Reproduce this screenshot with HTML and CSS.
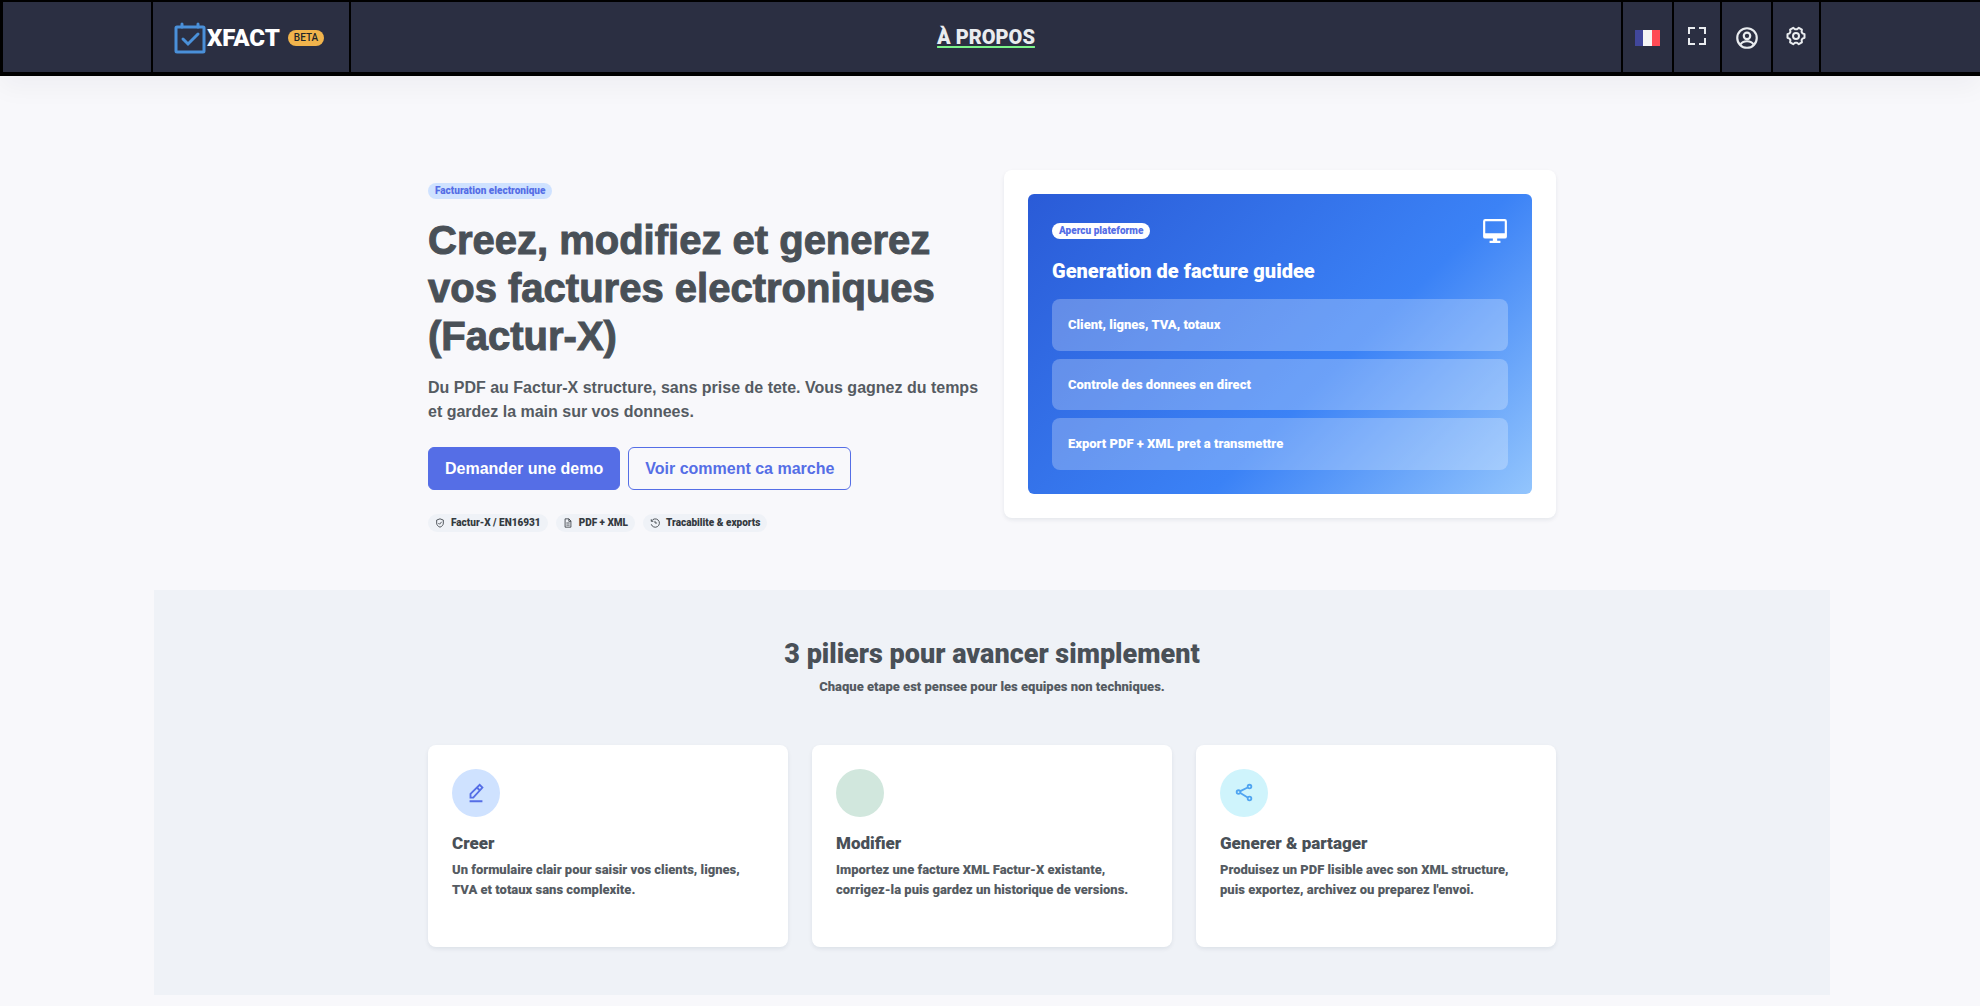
FILE: index.html
```html
<!DOCTYPE html>
<html lang="fr">
<head>
  <meta charset="UTF-8" />
  <meta name="viewport" content="width=device-width, initial-scale=1" />
  <title>XFACT - Facturation electronique</title>
  <link rel="stylesheet" href="styles.css">
</head>
<body>

  <!-- Barre de navigation -->
  <header class="topbar">
    <a class="brand" href="#">
      <svg class="brand-logo" viewBox="0 0 32 32" aria-hidden="true">
        <rect x="2" y="5" width="28" height="25" rx="1" />
        <path d="M8 2v3M24 2v3M9 17l5 5 10-10" />
      </svg>
      <span class="brand-name">XFACT</span>
      <span class="beta">BETA</span>
    </a>

    <nav class="menu">
      <a href="#apropos">À PROPOS</a>
    </nav>

    <div class="tools">
      <button class="tool wide" type="button" aria-label="Langue">
        <svg class="flag" viewBox="0 0 25 16">
          <rect width="9" height="16" fill="#41479b" />
          <rect x="8" width="9" height="16" fill="#f5f5f5" />
          <rect x="17" width="8" height="16" fill="#ff4b55" />
        </svg>
      </button>
      <button class="tool" type="button" aria-label="Plein écran">
        <svg viewBox="0 0 24 24"><path d="M3 3h7v2H5v5H3V3zm11 0h7v7h-2V5h-5V3zM3 14h2v5h5v2H3v-7zm16 0h2v7h-7v-2h5v-5z" /></svg>
      </button>
      <button class="tool wide" type="button" aria-label="Compte">
        <svg class="big line" viewBox="0 0 24 24"><circle cx="12" cy="12" r="9" /><circle cx="12" cy="10" r="3" /><path d="M6 18c1-2 3-3 6-3s5 1 6 3" /></svg>
      </button>
      <button class="tool" type="button" aria-label="Paramètres">
        <svg class="line" viewBox="0 0 24 24"><path d="M20.500 13.800v-3.600L18.400 9.300l-.8-1.400.3-2.300-3.100-1.800L13 5.200h-2L9.200 3.800 6.100 5.600l.3 2.300-.8 1.400-2.100.9v3.600l2.100.9.8 1.400-.3 2.300 3.100 1.800 1.800-1.400h2l1.800 1.400 3.100-1.800-.3-2.300.8-1.400z" /><circle cx="12" cy="12" r="3" /></svg>
      </button>
    </div>
  </header>

  <main class="page">

    <!-- Accroche -->
    <section class="hero container">
      <div class="hero-text">
        <span class="badge badge-soft">Facturation electronique</span>
        <h1>Creez, modifiez et generez vos factures electroniques (Factur-X)</h1>
        <p class="lead">Du PDF au Factur-X structure, sans prise de tete. Vous gagnez du temps et gardez la main sur vos donnees.</p>
        <div class="actions">
          <a class="btn btn-primary" href="#demo">Demander une demo</a>
          <a class="btn btn-outline" href="#piliers">Voir comment ca marche</a>
        </div>
        <ul class="tags">
          <li>
            <svg viewBox="0 0 24 24"><path d="M12 2l8 3v7c0 5-3 8-8 10-5-2-8-5-8-10V5z" /><path d="M8 12l3 3 5-6" /></svg>
            Factur-X / EN16931
          </li>
          <li>
            <svg viewBox="0 0 24 24"><path d="M5 2h9l5 5v15H5zM14 2v6h5M8 12h8M8 17h8" /></svg>
            PDF + XML
          </li>
          <li>
            <svg viewBox="0 0 24 24"><path d="M4 7a10 10 0 1 1-1 8M3 3v5h5M12 7v5h5" /></svg>
            Tracabilite &amp; exports
          </li>
        </ul>
      </div>

      <div class="card hero-card">
        <div class="preview">
          <div class="preview-head">
            <span class="badge badge-light">Apercu plateforme</span>
            <svg class="screen" viewBox="0 0 24 24" aria-hidden="true"><path fill-rule="evenodd" d="M3 1h18a2 2 0 0 1 2 2v14a2 2 0 0 1-2 2h-7v2h3v2H7v-2h3v-2H3a2 2 0 0 1-2-2V3a2 2 0 0 1 2-2zm0 2v11h18V3z" /></svg>
          </div>
          <h2>Generation de facture guidee</h2>
          <ul class="steps">
            <li>Client, lignes, TVA, totaux</li>
            <li>Controle des donnees en direct</li>
            <li>Export PDF + XML pret a transmettre</li>
          </ul>
        </div>
      </div>
    </section>

    <!-- Piliers -->
    <section class="pillars" id="piliers">
      <div class="container">
        <h2>3 piliers pour avancer simplement</h2>
        <p class="subtitle">Chaque etape est pensee pour les equipes non techniques.</p>
        <div class="cards">
          <article class="card pillar">
            <div class="icon icon-blue">
              <svg viewBox="0 0 24 24"><path d="M6 13L16 3l3 3L9 17H6zM13 6l3 3M5 21h14" /></svg>
            </div>
            <h3>Creer</h3>
            <p>Un formulaire clair pour saisir vos clients, lignes, TVA et totaux sans complexite.</p>
          </article>
          <article class="card pillar">
            <div class="icon icon-green"></div>
            <h3>Modifier</h3>
            <p>Importez une facture XML Factur-X existante, corrigez-la puis gardez un historique de versions.</p>
          </article>
          <article class="card pillar">
            <div class="icon icon-cyan">
              <svg viewBox="0 0 24 24"><circle cx="6" cy="11" r="2" /><circle cx="18" cy="5" r="2" /><circle cx="18" cy="18" r="2" /><path d="M8 10l8-4M8 12l8 5" /></svg>
            </div>
            <h3>Generer &amp; partager</h3>
            <p>Produisez un PDF lisible avec son XML structure, puis exportez, archivez ou preparez l'envoi.</p>
          </article>
        </div>
      </div>
    </section>

  </main>

</body>
</html>
```
FILE: styles.css
```css
* {
  box-sizing: border-box;
}

body {
  margin: 0;
  font-family: Roboto, Arial, sans-serif;
  font-weight: 900;
  font-size: 13px;
  line-height: 20px;
  background-color: #f8f8fb;
  color: #555b62;
}

h1, h2, h3, p, ul {
  margin: 0;
  padding: 0;
}

h1, h2, h3 {
  color: #495057;
  font-weight: 900;
}

ul {
  list-style: none;
}

a {
  text-decoration: none;
}

svg {
  display: block;
}

/* Barre du haut */
.topbar {
  display: flex;
  height: 76px;
  padding: 0 159px 0 148px;
  background-color: #2b2f42;
  border: solid #000;
  border-width: 2px 0 4px 3px;
  box-shadow: 0 12px 24px rgba(18, 20, 40, 0.04);
}

.brand {
  display: flex;
  align-items: center;
  width: 200px;
  padding: 2px 0 0 21px;
  border: solid #000;
  border-width: 0 2px;
  color: #fff;
}

.brand-logo {
  width: 32px;
  height: 32px;
  fill: none;
  stroke: #4a90d9;
  stroke-width: 3;
  stroke-linecap: round;
}

.brand-name {
  margin-left: 1px;
  font-size: 24px;
}

.beta {
  margin-left: 8px;
  padding: 0 6px;
  border-radius: 8px;
  background-color: #f1b44c;
  color: #212529;
  font-size: 10px;
  font-weight: 500;
  line-height: 16px;
}

.menu {
  flex: 1;
  display: flex;
  align-items: center;
  justify-content: center;
}

.menu a {
  color: #e9ecef;
  font-size: 20px;
  text-decoration: underline #7cf58a 2px;
  text-underline-offset: 2px;
}

.tools {
  display: flex;
  border-left: 2px solid #000;
}

.tool {
  display: flex;
  align-items: center;
  justify-content: center;
  width: 48px;
  padding: 0 0 2px;
  border: 0;
  border-right: 2px solid #000;
  background: none;
  cursor: pointer;
}

.tool.wide {
  width: 51px;
  padding: 2px 0 0;
}

.tool svg {
  width: 24px;
  height: 24px;
  fill: #e9ecef;
}

.tool .flag {
  width: 25px;
  height: 16px;
}

.tool .big {
  width: 26px;
  height: 26px;
}

.tool .line {
  fill: none;
  stroke: #e9ecef;
  stroke-width: 2;
  stroke-linejoin: round;
}

/* Contenu */
.page {
  padding: 94px 150px 10px 154px;
}

.container {
  max-width: 1128px;
  margin: 0 auto;
}

.card {
  background-color: #fff;
  border-radius: 8px;
  box-shadow: 0 2px 4px rgba(15, 34, 58, 0.08);
}

.badge {
  display: inline-block;
  padding: 0 7px;
  border-radius: 8px;
  font-size: 10px;
  line-height: 16px;
  color: #556ee6;
}

.badge-soft {
  background-color: #cfe2ff;
}

.badge-light {
  background-color: #fff;
}

.hero {
  display: grid;
  grid-template-columns: 1fr 1fr;
  gap: 24px;
  align-items: center;
  padding-bottom: 48px;
}

.hero h1,
.lead,
.btn {
  font-family: "Liberation Sans", Arial, sans-serif;
  font-weight: 700;
}

.hero h1 {
  margin: 16px 0;
  font-size: 40px;
  line-height: 48px;
  -webkit-text-stroke: 1px #495057;
}

.lead {
  font-size: 16px;
  line-height: 24px;
}

.actions {
  display: flex;
  gap: 8px;
  margin: 23px 0 24px;
}

.btn {
  padding: 8px 16px;
  border: 1px solid #556ee6;
  border-radius: 6px;
  font-size: 16px;
  line-height: 25px;
}

.btn-primary {
  background-color: #556ee6;
  color: #fff;
}

.btn-outline {
  color: #556ee6;
}

.tags {
  display: flex;
  gap: 8px;
}

.tags li {
  display: flex;
  align-items: center;
  gap: 6px;
  padding: 0 7px;
  border-radius: 9px;
  background-color: #eff2f7;
  color: #343a40;
  font-size: 10px;
  line-height: 18px;
}

.tags svg {
  width: 10px;
  height: 10px;
  fill: none;
  stroke: #343a40;
  stroke-width: 2;
}

.hero-card {
  margin-bottom: 24px;
  padding: 24px;
}

.preview {
  display: flex;
  flex-direction: column;
  height: 300px;
  padding: 24px;
  border-radius: 6px;
  background: linear-gradient(135deg, #2a5bd7 0%, #3b82f6 60%, #93c5fd 100%);
  color: #fff;
}

.preview-head {
  display: flex;
  align-items: center;
  justify-content: space-between;
}

.screen {
  width: 26px;
  height: 26px;
  fill: #fff;
}

.preview h2 {
  margin: 15px 0 16px;
  color: #fff;
  font-size: 20px;
  line-height: 24px;
}

.steps {
  flex: 1;
  display: flex;
  flex-direction: column;
  gap: 8px;
}

.steps li {
  flex: 1;
  display: flex;
  align-items: center;
  padding: 0 16px;
  border-radius: 8px;
  background-color: rgba(255, 255, 255, 0.25);
}

.pillars {
  padding: 48px 0;
  background-color: #eff2f7;
}

.pillars h2 {
  font-size: 27px;
  line-height: 32px;
  text-align: center;
}

.subtitle {
  margin: 7px 0 48px;
  text-align: center;
}

.cards {
  display: grid;
  grid-template-columns: repeat(3, 1fr);
  gap: 24px;
}

.pillar {
  padding: 24px 24px 47px;
}

.icon {
  display: flex;
  align-items: center;
  justify-content: center;
  width: 48px;
  height: 48px;
  margin-bottom: 16px;
  border-radius: 50%;
}

.icon svg {
  width: 22px;
  height: 22px;
  fill: none;
  stroke: currentColor;
  stroke-width: 2;
}

.icon-blue {
  background-color: #cfe2ff;
  color: #556ee6;
}

.icon-green {
  background-color: #d1e7dd;
}

.icon-cyan {
  background-color: #cff4fc;
  color: #50a5f1;
}

.pillar h3 {
  margin-bottom: 7px;
  font-size: 17px;
  line-height: 20px;
}
```
